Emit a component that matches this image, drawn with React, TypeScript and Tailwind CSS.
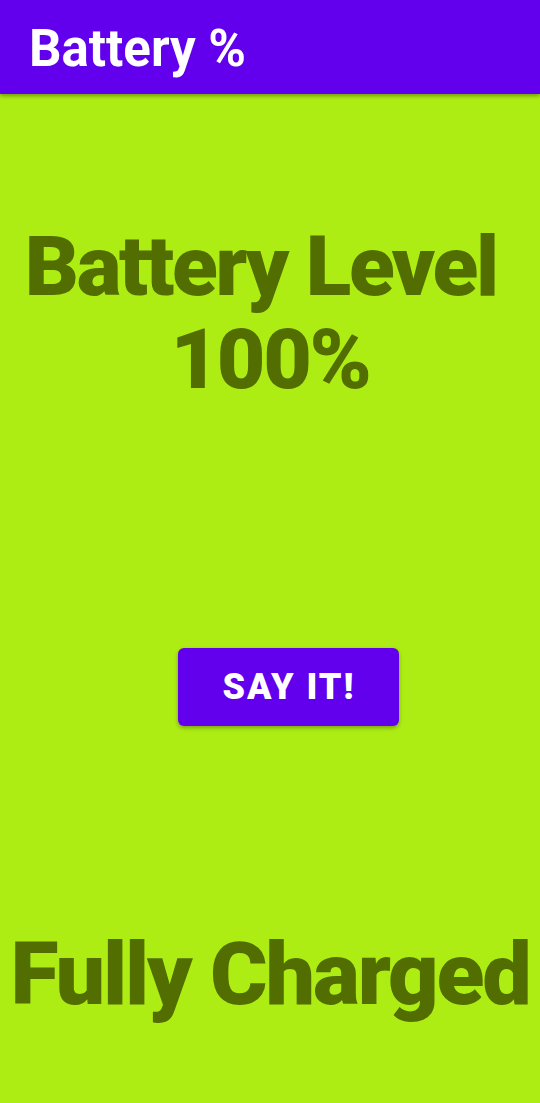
import React from 'react';

function App() {
    return (
        <div className="w-[540px] h-[1103px] bg-[#aeed14] flex flex-col overflow-hidden" style={{fontFamily: 'Roboto, "Liberation Sans", sans-serif'}}>
            <header className="h-[94px] bg-[#6200ee] shadow-[0_2px_4px_rgba(0,0,0,0.35)] flex items-center pl-[29px] shrink-0">
                <h1 className="text-white font-bold text-[51px] leading-none pt-[2px]">Battery %</h1>
            </header>

            <div className="flex flex-col items-center pt-[126px]">
                <p className="text-[#526d00] font-black text-[84px] leading-[93px] tracking-[-2.3px] text-center w-full whitespace-pre">
                    {"Battery Level \n100%"}
                </p>
            </div>

            <div className="flex justify-center pt-[242px] pl-[36px]">
                <button className="w-[221px] h-[78px] bg-[#6200ee] rounded-[6px] shadow-[0_2px_4px_rgba(0,0,0,0.3)] text-white font-black text-[36px] tracking-[2px] uppercase pl-[2px]">
                    Say it!
                </button>
            </div>

            <div className="flex justify-center pt-[204px]">
                <p className="text-[#526d00] font-black text-[88px] leading-none tracking-[-2.2px] whitespace-nowrap">Fully Charged</p>
            </div>
        </div>
    );
}

export default App;
